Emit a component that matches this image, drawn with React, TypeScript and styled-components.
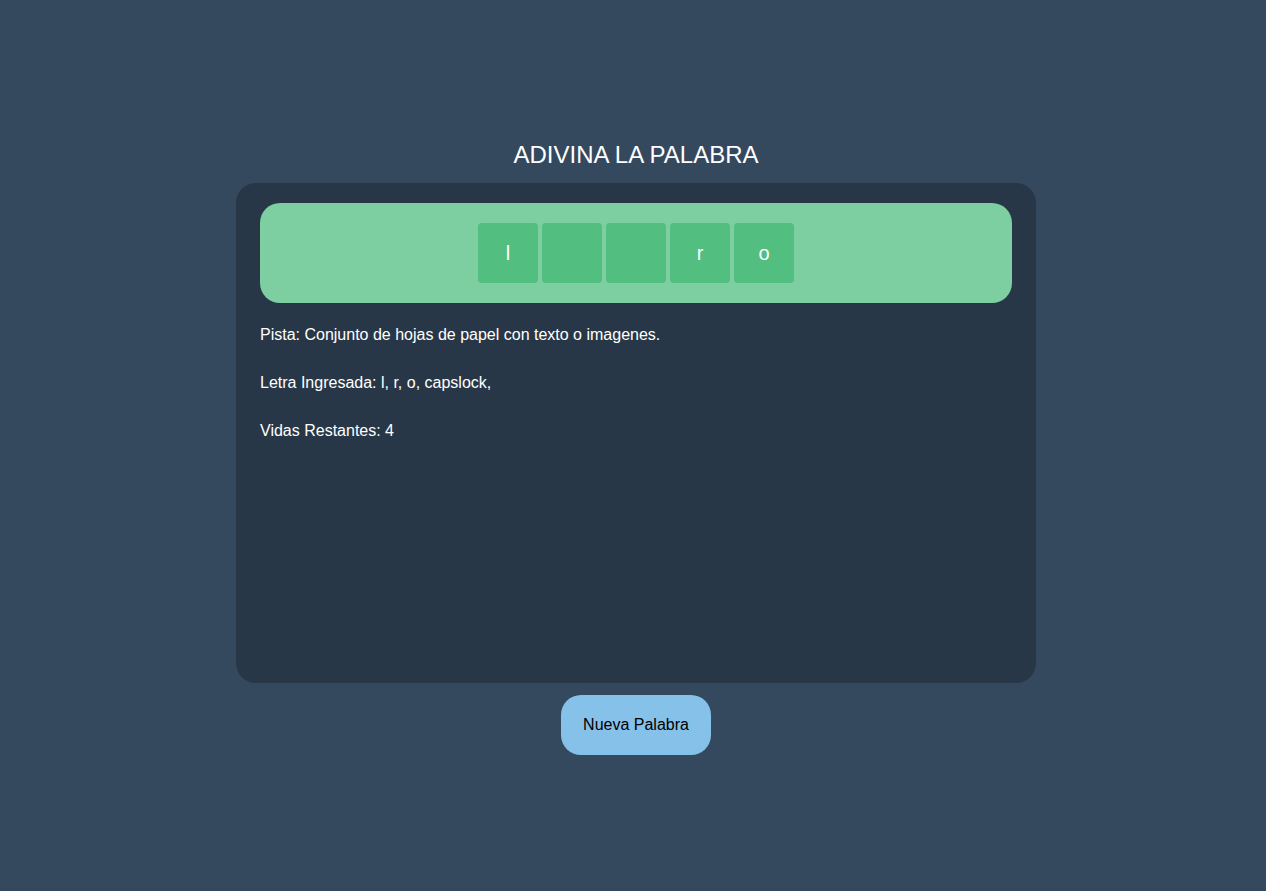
import React from "react";
import styled, { createGlobalStyle } from "styled-components";

const GlobalStyle = createGlobalStyle`
    html, body {
        margin: 0;
        padding: 0;
        background-color: #34495e;
        font-family: "Liberation Sans", Arial, sans-serif;
    }
`;

const Page = styled.div`
    min-height: 891px;
    display: flex;
    flex-direction: column;
    align-items: center;
    padding: 141px 0 0 6px;
    box-sizing: border-box;
`;

const Title = styled.h1`
    margin: 0 0 14px;
    font-size: 24px;
    line-height: 28px;
    font-weight: normal;
    color: #ffffff;
`;

const Card = styled.div`
    width: 800px;
    height: 500px;
    box-sizing: border-box;
    padding: 20px 24px;
    background-color: #283747;
    border-radius: 20px;
`;

const WordBox = styled.div`
    display: flex;
    justify-content: center;
    gap: 4px;
    padding: 20px;
    background-color: #7dcea0;
    border-radius: 20px;
`;

const Tile = styled.div`
    width: 60px;
    height: 60px;
    display: flex;
    align-items: center;
    justify-content: center;
    background-color: #52be80;
    border-radius: 4px;
    color: #ffffff;
    font-size: 20px;
`;

const Info = styled.div`
    display: flex;
    flex-direction: column;
    gap: 30px;
    margin-top: 23px;
`;

const Line = styled.p`
    margin: 0;
    font-size: 16px;
    line-height: 18px;
    color: #ffffff;
`;

const Button = styled.button`
    margin-top: 12px;
    width: 150px;
    height: 60px;
    border: none;
    border-radius: 20px;
    background-color: #85c1e9;
    color: #000000;
    font-family: "Liberation Sans", Arial, sans-serif;
    font-size: 16px;
    cursor: pointer;
`;

const letters = ["l", "", "", "r", "o"];

const App: React.FC = () => {
    return (
        <>
            <GlobalStyle />
            <Page>
                <Title>ADIVINA LA PALABRA</Title>
                <Card>
                    <WordBox>
                        {letters.map((letter, index) => (
                            <Tile key={index}>{letter}</Tile>
                        ))}
                    </WordBox>
                    <Info>
                        <Line>Pista: Conjunto de hojas de papel con texto o imagenes.</Line>
                        <Line>Letra Ingresada: l, r, o, capslock,</Line>
                        <Line>Vidas Restantes: 4</Line>
                    </Info>
                </Card>
                <Button>Nueva Palabra</Button>
            </Page>
        </>
    );
};

export default App;
